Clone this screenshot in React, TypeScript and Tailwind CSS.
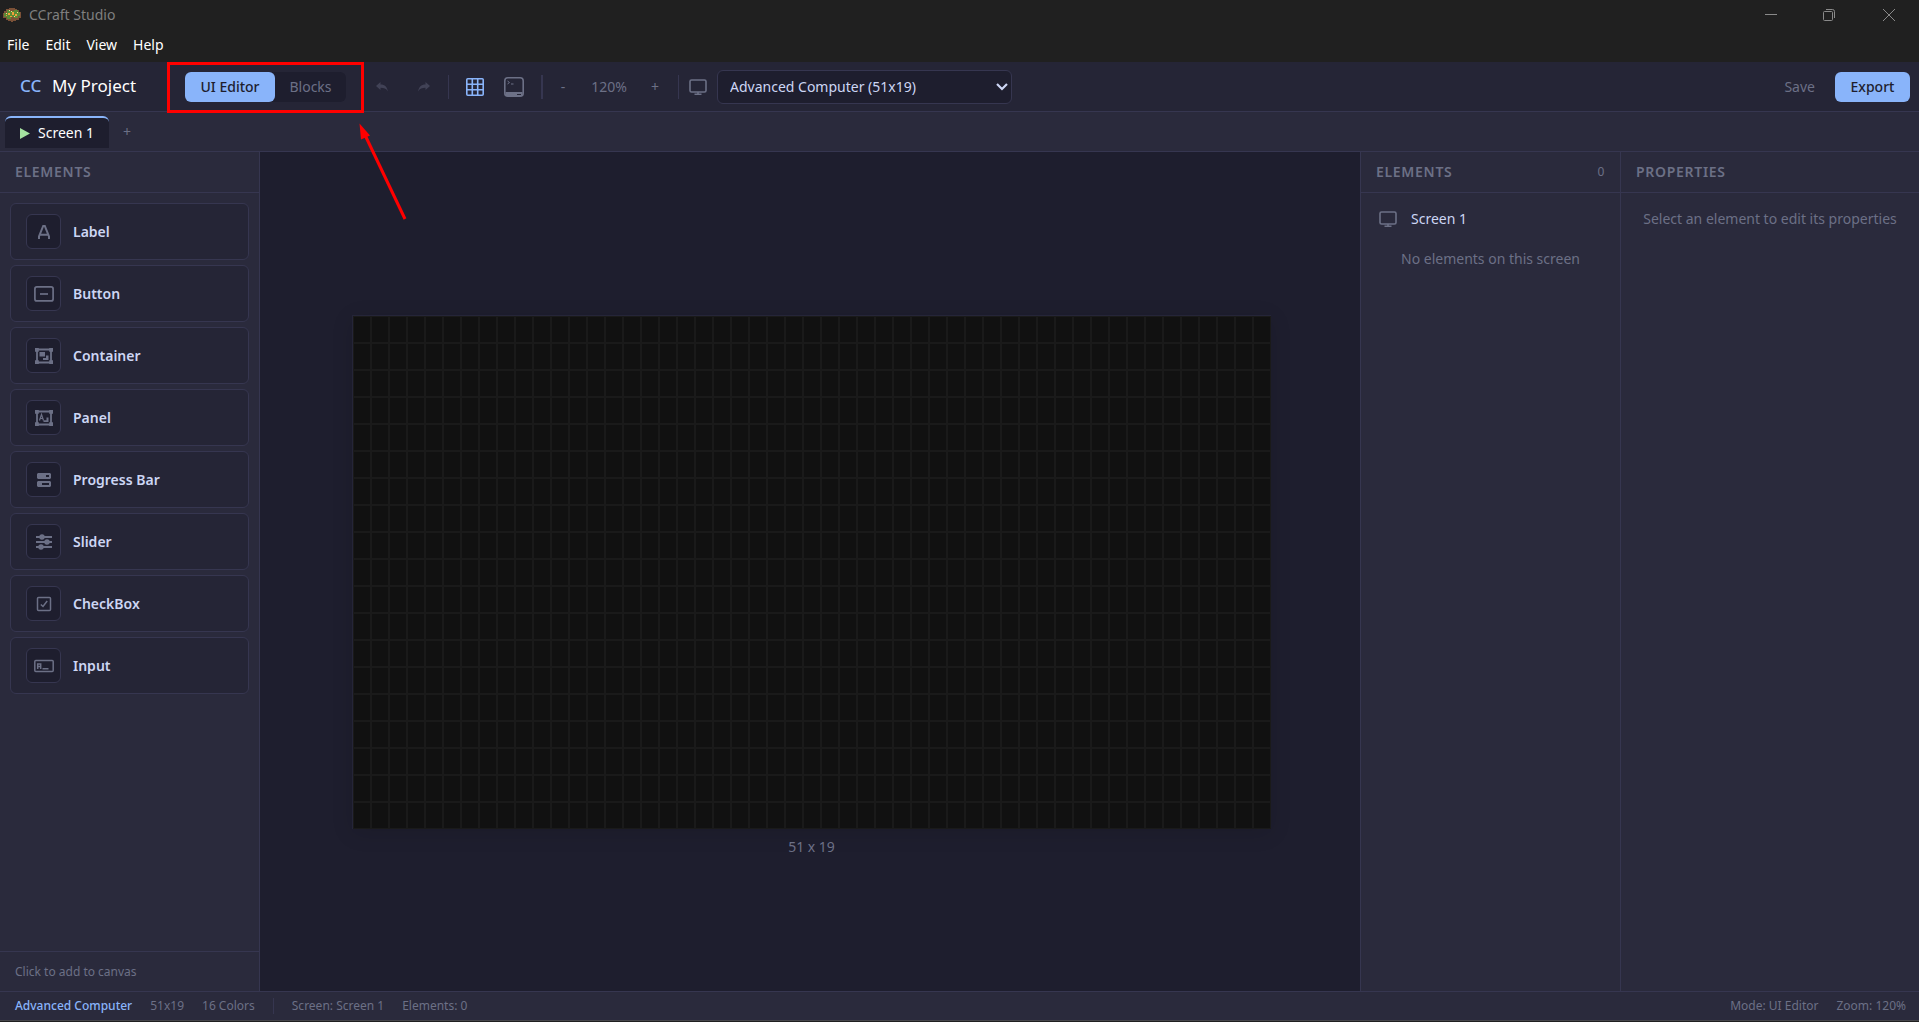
import React, { useState } from 'react';
import type { ReactNode } from 'react';

const HEADING = 'text-sm font-semibold tracking-wider text-[#6c7086]';

const Monitor = () => (
  <svg width="18" height="18" viewBox="0 0 18 18" fill="none" stroke="#6c7086" strokeWidth="1.6">
    <rect x="1" y="2" width="16" height="12" rx="1.5" />
    <path d="M9 14v2M5.5 16.2h7" />
  </svg>
);

const Frame = ({ children }: { children: ReactNode }) => (
  <svg width="20" height="20" viewBox="0 0 20 20" fill="#6c7086">
    <path d="M3 3.5h14v13H3z" fill="none" stroke="#6c7086" strokeWidth="1.8" />
    <path d="M1 2h3.8v3.8H1zM15.2 2H19v3.800h-3.800zM1 14.200h3.800V18H1zM15.200 14.200H19V18h-3.800z" />
    {children}
  </svg>
);

const elements: { name: string; icon: ReactNode }[] = [
  {
    name: 'Label',
    icon: (
      <svg width="20" height="20" viewBox="0 0 20 20" fill="none" stroke="#6c7086" strokeWidth="2">
        <path d="M5 17V14.500L9.200 4h1.600L15 14.500V17M6.200 12.800h7.600" />
      </svg>
    ),
  },
  {
    name: 'Button',
    icon: (
      <svg width="20" height="20" viewBox="0 0 20 20" fill="none" stroke="#6c7086" strokeWidth="1.700">
        <rect x="0.900" y="2.900" width="18.200" height="14" rx="2" />
        <path d="M6 10h8" />
      </svg>
    ),
  },
  {
    name: 'Container',
    icon: (
      <Frame>
        <path d="M5.500 6H11v4.500H5.500zM12 9.500h2.500V14H9v-2h3z" />
      </Frame>
    ),
  },
  {
    name: 'Panel',
    icon: (
      <Frame>
        <path d="M5.500 12.500L7.500 6.500l2 6M6.200 10.500h2.600" fill="none" stroke="#6c7086" strokeWidth="1.200" />
        <path d="M12.500 9.500h2V14H9.500v-1.700h3z" />
      </Frame>
    ),
  },
  {
    name: 'Progress Bar',
    icon: (
      <svg width="20" height="20" viewBox="0 0 20 20" fill="#6c7086" fillRule="evenodd">
        <path d="M4 3h12l1 1v4l-1 1H4L3 8V4zM12 5v2h3V5zM4 11h12l1 1v4l-1 1H4l-1-1v-4zM8 13v2h7v-2z" />
      </svg>
    ),
  },
  {
    name: 'Slider',
    icon: (
      <svg width="20" height="20" viewBox="0 0 20 20" fill="#6c7086" stroke="#6c7086" strokeWidth="2">
        <path d="M2 5h16M2 10h16M2 15h16" />
        <circle cx="8" cy="5" r="1.700" />
        <circle cx="13" cy="10" r="1.700" />
        <circle cx="7" cy="15" r="1.700" />
      </svg>
    ),
  },
  {
    name: 'CheckBox',
    icon: (
      <svg width="20" height="20" viewBox="0 0 20 20" fill="none" stroke="#6c7086" strokeWidth="1.500">
        <rect x="3.500" y="3.500" width="13" height="13" rx="1" />
        <path d="M6.800 10.500l2.200 2 4.200-5.500" />
      </svg>
    ),
  },
  {
    name: 'Input',
    icon: (
      <svg width="20" height="20" viewBox="0 0 20 20" fill="none" stroke="#6c7086" strokeWidth="1.500">
        <rect x="0.800" y="4.500" width="18.400" height="11" rx="1" />
        <path d="M3.700 13V8h3v5M3.700 10.500h3M8.500 12.800h6" />
      </svg>
    ),
  },
];

const App = () => {
  const [mode, setMode] = useState('UI Editor');
  const [device, setDevice] = useState('advanced');

  return (
    <div className="relative flex h-screen flex-col overflow-hidden bg-[#202020] font-['Noto_Sans','Segoe_UI',sans-serif] text-sm text-[#cdd6f4]">
      <div className="flex h-[29px] shrink-0 items-center pl-[3px] text-[#7f7f7f]">
        <svg width="18" height="14" viewBox="0 0 18 14" shapeRendering="crispEdges">
          <path d="M6 0h6v1h2v1h2v2h2v6h-2v2h-3v1h-3v1H8v-1H5v-1H3v-2H0V5h1V3h2V1h3z" fill="#7b5137" />
          <path d="M4 2h3v1h4V2h4v2h2v4h-2v2h-4V9H8v2H4V9H1V5h3z" fill="#5a8a35" />
          <path d="M5 5h2v2H5zM9 4h2v3H9zM12 6h2v2h-2zM7 8h2v1H7zM3 7h1v1H3z" fill="#f0a03a" />
          <path d="M3 5h1v1H3zM8 3h1v1H8zM11 8h1v1h-1zM14 4h1v1h-1zM6 2h1v1H6z" fill="#f2df8a" />
        </svg>
        <span className="ml-2 text-sm">CCraft Studio</span>
        <div className="ml-auto flex">
          <button aria-label="Minimize" className="flex h-7 w-[58px] items-center justify-center">
            <svg width="12" height="12" viewBox="0 0 12 12" stroke="#8a8a8a"><path d="M0 5.500h12" /></svg>
          </button>
          <button aria-label="Restore" className="flex h-7 w-[58px] items-center justify-center">
            <svg width="12" height="12" viewBox="0 0 12 12" fill="none" stroke="#8a8a8a">
              <rect x="0.500" y="2.500" width="9" height="9" rx="1" />
              <path d="M3 .5h6.500a2 2 0 0 1 2 2V9" />
            </svg>
          </button>
          <button aria-label="Close" className="flex h-7 w-[61px] items-center justify-center">
            <svg width="12" height="12" viewBox="0 0 12 12" stroke="#8a8a8a"><path d="M0 0l12 12M12 0L0 12" /></svg>
          </button>
        </div>
      </div>

      <nav className="flex h-[33px] shrink-0 items-center gap-4 pb-0.5 pl-[7px] text-sm text-white">
        <button>File</button>
        <button>Edit</button>
        <button>View</button>
        <button>Help</button>
      </nav>

      <header className="flex h-[50px] shrink-0 items-center border-b border-[#363650] bg-[#252536] pl-5 pr-[9px]">
        <span className="w-8 text-[17px] font-medium text-[#89b4fa]">CC</span>
        <span className="w-[133px] text-[17px] text-white">My Project</span>
        <div className="flex rounded-md bg-[#1e1e2e]">
          {['UI Editor', 'Blocks'].map((item) => (
            <button
              key={item}
              onClick={() => setMode(item)}
              className={mode === item ? 'h-[30px] w-[90px] rounded-md bg-[#89b4fa] font-medium text-[#1e1e2e]' : 'h-[30px] w-[71px] text-[#6c7086]'}
            >
              {item}
            </button>
          ))}
        </div>
        <div className="ml-[15px] flex items-center">
          <button aria-label="Undo" className="flex h-8 w-[42px] items-center justify-center">
            <svg width="12" height="10" viewBox="0 0 12 10" fill="#414256"><path d="M0 4L4.500 0v2.500C9 2.500 11 5 12 9.500 10 6.500 8 5.800 4.500 5.800V8z" /></svg>
          </button>
          <button aria-label="Redo" className="flex h-8 w-[42px] items-center justify-center">
            <svg width="12" height="10" viewBox="0 0 12 10" fill="#414256"><path d="M12 4L7.500 0v2.500C3 2.500 1 5 0 9.500 2 6.500 4 5.800 7.500 5.800V8z" /></svg>
          </button>
          <div className="ml-[3px] h-6 w-px bg-[#363650]" />
          <button aria-label="Toggle grid" className="ml-[17px] p-0">
            <svg width="18" height="18" viewBox="0 0 18 18" fill="none" stroke="#89b4fa" strokeWidth="1.600">
              <rect x="0.800" y="0.800" width="16.400" height="16.400" rx="1" />
              <path d="M6.300 1v16M11.700 1v16M1 6.300h16M1 11.700h16" />
            </svg>
          </button>
          <button aria-label="Preview terminal" className="ml-5">
            <svg width="20" height="20" viewBox="0 0 20 20" fill="none" stroke="#6c7086" strokeWidth="1.600">
              <rect x="0.800" y="0.800" width="18.400" height="18.400" rx="3" />
              <path d="M1.500 17h17" strokeWidth="4" />
              <path d="M13 17.500h4" stroke="#252536" strokeWidth="1" />
              <path d="M3.500 4l2 1.500-2 1.500M7 7h2.500" strokeWidth="1" />
            </svg>
          </button>
          <div className="ml-[17px] h-6 w-0.5 bg-[#363650]" />
          <button aria-label="Zoom out" className="ml-1.5 h-8 w-7 text-[#6c7086]">-</button>
          <span className="w-16 text-center text-[#6c7086]">120%</span>
          <button aria-label="Zoom in" className="h-8 w-7 text-[#6c7086]">+</button>
          <div className="ml-[9px] h-6 w-px bg-[#363650]" />
          <label htmlFor="device" aria-label="Device" className="mx-2.5"><Monitor /></label>
          <div className="relative">
            <select
              id="device"
              value={device}
              onChange={(e) => setDevice(e.target.value)}
              className="h-[34px] w-[295px] appearance-none rounded-md border border-[#363650] bg-[#1e1e2e] pl-3 text-sm"
            >
              <option value="advanced">Advanced Computer (51x19)</option>
            </select>
            <svg className="pointer-events-none absolute right-1 top-3" width="12" height="10" viewBox="0 0 12 10" fill="none" stroke="#cdd6f4" strokeWidth="2.200"><path d="M1 2l5 5 5-5" /></svg>
          </div>
        </div>
        <div className="ml-auto flex items-center">
          <button className="px-5 text-[#6c7086]">Save</button>
          <button className="h-[30px] w-[75px] rounded-md bg-[#89b4fa] font-medium text-[#1e1e2e]">Export</button>
        </div>
      </header>

      <div className="flex h-10 shrink-0 items-start border-b border-[#363650] bg-[#2a2a3c] pl-[5px] pt-1">
        <button className="flex h-8 items-center gap-2 rounded-t-md border-t-2 border-[#89b4fa] bg-[#1e1e2e] px-[15px] text-white">
          <svg width="10" height="11" viewBox="0 0 10 11" fill="#a6e3a1"><path d="M0 0l10 5.500L0 11z" /></svg>
          Screen 1
        </button>
        <button aria-label="Add screen" className="h-8 w-9 text-[#6c7086]">+</button>
      </div>

      <div className="flex min-h-0 flex-1">
        <aside className="flex w-[260px] shrink-0 flex-col border-r border-[#363650] bg-[#2a2a3c]">
          <h2 className={`flex h-[41px] shrink-0 items-center border-b border-[#363650] px-[15px] ${HEADING}`}>ELEMENTS</h2>
          <div className="flex flex-1 flex-col gap-[5px] p-2.5">
            {elements.map(({ name, icon }) => (
              <button key={name} className="flex h-[57px] items-center gap-3 rounded-md border border-[#363650] bg-[#252536] px-[15px] text-sm font-semibold">
                <span className="flex size-[35px] items-center justify-center rounded-md border border-[#363650] bg-[#1e1e2e]">{icon}</span>
                {name}
              </button>
            ))}
          </div>
          <p className="flex h-10 shrink-0 items-center border-t border-[#363650] px-[15px] text-xs text-[#6c7086]">Click to add to canvas</p>
        </aside>

        <main className="flex min-w-0 flex-1 flex-col items-center justify-center gap-2 bg-[#1e1e2e] pl-[3px] pt-[29px]">
          <div className="border-l border-t border-[#252538] shadow-[0_4px_20px_rgba(0,0,0,0.12)]">
            <svg className="block" width="918" height="513">
              <defs>
                <pattern id="cells" width="18" height="27" patternUnits="userSpaceOnUse">
                  <rect width="18" height="27" fill="#1a1a1a" />
                  <rect x="1" y="1" width="16" height="25" fill="#111111" />
                </pattern>
              </defs>
              <rect width="918" height="513" fill="url(#cells)" />
            </svg>
          </div>
          <p className="text-sm text-[#6c7086]">51 x 19</p>
        </main>

        <aside className="w-[260px] shrink-0 border-l border-[#363650] bg-[#2a2a3c]">
          <h2 className={`flex h-[41px] items-center justify-between border-b border-[#363650] px-[15px] ${HEADING}`}>
            ELEMENTS <span className="text-xs font-normal">0</span>
          </h2>
          <div className="flex h-[52px] items-center gap-3.5 pl-[18px]"><Monitor />Screen 1</div>
          <p className="pt-1 text-center text-[#6c7086]">No elements on this screen</p>
        </aside>
        <aside className="w-[299px] shrink-0 border-l border-[#363650] bg-[#2a2a3c]">
          <h2 className={`flex h-[41px] items-center border-b border-[#363650] px-[15px] ${HEADING}`}>PROPERTIES</h2>
          <p className="flex h-[52px] items-center justify-center text-[#6c7086]">Select an element to edit its properties</p>
        </aside>
      </div>

      <footer className="mb-px flex h-[30px] shrink-0 items-center gap-[18px] border-y border-t-[#363650] border-b-[#45454a] bg-[#2a2a3c] pl-[15px] pr-[13px] text-xs text-[#6c7086]">
        <span className="font-medium text-[#89b4fa]">Advanced Computer</span>
        <span>51x19</span>
        <span>16 Colors</span>
        <span className="h-4 w-px bg-[#363650]" />
        <span>Screen: Screen 1</span>
        <span>Elements: 0</span>
        <span className="ml-auto">Mode: UI Editor</span>
        <span>Zoom: 120%</span>
      </footer>

      <svg className="pointer-events-none absolute left-[167px] top-[62px]" width="240" height="160" viewBox="0 0 240 160" fill="none" stroke="#ff0000" strokeWidth="3">
        <path d="M1.500 1.500h194v48H1.500z" />
        <path d="M198 73l40 84" />
        <path d="M192.500 61.500l10.500 12-9 4z" fill="#ff0000" stroke="none" />
      </svg>
    </div>
  );
};

export default App;
